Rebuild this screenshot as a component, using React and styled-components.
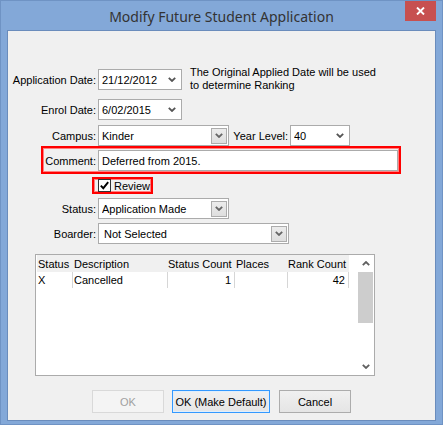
import React from "react";
import styled, { createGlobalStyle } from "styled-components";

const GlobalStyle = createGlobalStyle`
  html, body { margin: 0; padding: 0; background: #83a8d8; }
  body {
    font-family: "Liberation Sans", Arial, sans-serif;
    font-size: 11px;
    color: #000;
  }
  * { box-sizing: border-box; }
`;

const Window = styled.div`
  width: 443px;
  height: 425px;
  background: #83a8d8;
  border: 1px solid #6f93c4;
  padding: 0 6px 3px 6px;
  display: flex;
  flex-direction: column;
`;

const TitleBar = styled.div`
  height: 29px;
  display: grid;
  grid-template-columns: 1fr auto 1fr;
  align-items: center;
`;

const Title = styled.div`
  grid-column: 2;
  font-family: "Noto Sans", "Open Sans", sans-serif;
  font-size: 14px;
  color: #333;
  padding-top: 1px;
  white-space: nowrap;
`;

const CloseButton = styled.div`
  grid-column: 3;
  justify-self: end;
  align-self: start;
  width: 31px;
  height: 20px;
  background: #c75050;
  display: flex;
  align-items: center;
  justify-content: center;
`;

const Client = styled.div`
  flex: 1;
  background: #f0f0f0;
  border: 1px solid #6a8cbc;
  display: flex;
  flex-direction: column;
`;

const FieldRow = styled.div`
  display: flex;
  align-items: center;
  margin-top: ${(p) => p.$top}px;
  margin-left: ${(p) => p.$left || 0}px;
`;

const Label = styled.div`
  width: ${(p) => p.$width}px;
  margin-left: ${(p) => p.$left || 0}px;
  text-align: right;
  white-space: nowrap;
  margin-right: 2px;
`;

const Combo = styled.div`
  width: ${(p) => p.$width}px;
  height: 21px;
  background: #fff;
  border: 1px solid #ababab;
  display: flex;
  align-items: center;
  padding-left: ${(p) => p.$pad || 3}px;
  padding-right: ${(p) => (p.$button ? 1 : 5)}px;
`;

const ComboText = styled.span`
  flex: 1;
  white-space: nowrap;
  overflow: hidden;
`;

const DropButton = styled.div`
  width: 16px;
  height: 16px;
  border: 1px solid #acacac;
  background: linear-gradient(#ececec, #dedede);
  display: flex;
  align-items: center;
  justify-content: center;
`;

const InfoText = styled.div`
  margin-left: 8px;
  align-self: flex-start;
  margin-top: -1px;
  line-height: 13px;
`;

const Highlight = styled.div`
  display: flex;
  align-items: center;
  align-self: flex-start;
  margin-top: ${(p) => p.$top}px;
  margin-left: ${(p) => p.$left}px;
  border: 2px solid #ff0000;
  box-shadow: inset 0 0 0 1px #ff8080;
  padding: ${(p) => p.$pad};
`;

const TextBox = styled.div`
  width: ${(p) => p.$width}px;
  height: 21px;
  background: #fff;
  border: 1px solid #ababab;
  display: flex;
  align-items: center;
  padding-left: 3px;
`;

const CheckBox = styled.div`
  width: 13px;
  height: 13px;
  border: 1px solid #333;
  background: #fff;
  display: flex;
  align-items: center;
  justify-content: center;
  margin-right: 3px;
`;

const ListBox = styled.div`
  margin-top: ${(p) => p.$top}px;
  margin-left: ${(p) => p.$left}px;
  width: 340px;
  height: 122px;
  background: #fff;
  border: 1px solid #ababab;
  display: flex;
`;

const ListArea = styled.div`
  flex: 1;
  padding-left: 1px;
`;

const GridLine = styled.div`
  display: grid;
  grid-template-columns: 36px 95px 67px 53px 61px;
  width: 312px;
`;

const HeaderLine = styled(GridLine)`
  height: 17px;
  background: #f0f0f0;
  align-items: center;
`;

const RowLine = styled(GridLine)`
  height: 16px;
  align-items: stretch;
`;

const HeaderCell = styled.div`
  padding-left: ${(p) => (p.$flush ? 0 : 1)}px;
  white-space: nowrap;
  overflow: hidden;
`;

const Cell = styled.div`
  display: flex;
  align-items: center;
  justify-content: ${(p) => (p.$right ? "flex-end" : "flex-start")};
  padding: 0 3px 0 1px;
  border-right: 1px solid #d6d6d6;
  white-space: nowrap;
`;

const ScrollBar = styled.div`
  width: 17px;
  display: flex;
  flex-direction: column;
  background: #fff;
`;

const ScrollArrow = styled.div`
  height: 17px;
  display: flex;
  align-items: center;
  justify-content: center;
`;

const Thumb = styled.div`
  height: 51px;
  margin: 0 1px 0 1px;
  background: #cdcdcd;
`;

const Track = styled.div`
  flex: 1;
`;

const ButtonBar = styled.div`
  display: flex;
  margin-top: ${(p) => p.$top}px;
  margin-left: ${(p) => p.$left}px;
`;

const Button = styled.div`
  width: ${(p) => p.$width}px;
  height: 23px;
  margin-left: ${(p) => p.$gap || 0}px;
  display: flex;
  align-items: center;
  justify-content: center;
  white-space: nowrap;
  border: 1px solid
    ${(p) =>
      p.$variant === "disabled"
        ? "#d9d9d9"
        : p.$variant === "default"
        ? "#3399ff"
        : "#acacac"};
  background: ${(p) =>
    p.$variant === "disabled"
      ? "#f4f4f4"
      : "linear-gradient(#f0f0f0, #e5e5e5)"};
  color: ${(p) => (p.$variant === "disabled" ? "#a0a0a0" : "#000")};
  box-shadow: ${(p) =>
    p.$variant === "default" ? "inset 0 0 0 1px #e0eefc" : "none"};
`;

const Chevron = ({ up, color = "#555" }) => (
  <svg width="8" height="5" viewBox="0 0 8 5">
    <polyline
      points={up ? "0.8,4.2 4,1 7.2,4.2" : "0.8,0.8 4,4 7.2,0.8"}
      fill="none"
      stroke={color}
      strokeWidth="1.8"
    />
  </svg>
);

const CloseGlyph = () => (
  <svg width="9" height="8" viewBox="0 0 9 8">
    <path d="M1 0.5 L8 7.5 M8 0.5 L1 7.5" stroke="#fff" strokeWidth="1.9" />
  </svg>
);

const CheckGlyph = () => (
  <svg width="9" height="9" viewBox="0 0 9 9">
    <polyline points="0.8,4.6 3.3,7.2 8.2,1.2" fill="none" stroke="#000" strokeWidth="1.9" />
  </svg>
);

const DateField = ({ width, value }) => (
  <Combo $width={width}>
    <ComboText>{value}</ComboText>
    <Chevron />
  </Combo>
);

const SelectField = ({ width, value, pad }) => (
  <Combo $width={width} $button $pad={pad}>
    <ComboText>{value}</ComboText>
    <DropButton>
      <Chevron color="#666" />
    </DropButton>
  </Combo>
);

export default function App() {
  return (
    <>
      <GlobalStyle />
      <Window>
        <TitleBar>
          <Title>Modify Future Student Application</Title>
          <CloseButton>
            <CloseGlyph />
          </CloseButton>
        </TitleBar>
        <Client>
          <FieldRow $top={36}>
            <Label $width={88}>Application Date:</Label>
            <DateField width={84} value="21/12/2012" />
            <InfoText>
              The Original Applied Date will be used
              <br />
              to determine Ranking
            </InfoText>
          </FieldRow>
          <FieldRow $top={7}>
            <Label $width={88}>Enrol Date:</Label>
            <DateField width={84} value="6/02/2015" />
          </FieldRow>
          <FieldRow $top={5}>
            <Label $width={88}>Campus:</Label>
            <SelectField width={131} value="Kinder" />
            <Label $width={55} $left={4}>Year Level:</Label>
            <DateField width={60} value="40" />
          </FieldRow>
          <Highlight $top={0} $left={33} $pad="2px 1px 1px 0">
            <Label $width={53}>Comment:</Label>
            <TextBox $width={300}>Deferred from 2015.</TextBox>
          </Highlight>
          <Highlight $top={3} $left={84} $pad="0 1px 0 4px">
            <FieldRow $top={0}>
              <CheckBox>
                <CheckGlyph />
              </CheckBox>
              Review
            </FieldRow>
          </Highlight>
          <FieldRow $top={4}>
            <Label $width={88}>Status:</Label>
            <SelectField width={131} value="Application Made" />
          </FieldRow>
          <FieldRow $top={4}>
            <Label $width={88}>Boarder:</Label>
            <SelectField width={191} value="Not Selected" pad={5} />
          </FieldRow>
          <ListBox $top={10} $left={27}>
            <ListArea>
              <HeaderLine>
                <HeaderCell>Status</HeaderCell>
                <HeaderCell>Description</HeaderCell>
                <HeaderCell $flush>Status Count</HeaderCell>
                <HeaderCell>Places</HeaderCell>
                <HeaderCell $flush>Rank Count</HeaderCell>
              </HeaderLine>
              <RowLine>
                <Cell>X</Cell>
                <Cell>Cancelled</Cell>
                <Cell $right>1</Cell>
                <Cell></Cell>
                <Cell $right>42</Cell>
              </RowLine>
            </ListArea>
            <ScrollBar>
              <ScrollArrow>
                <Chevron up color="#606060" />
              </ScrollArrow>
              <Thumb />
              <Track />
              <ScrollArrow>
                <Chevron color="#606060" />
              </ScrollArrow>
            </ScrollBar>
          </ListBox>
          <ButtonBar $top={14} $left={84}>
            <Button $width={72} $variant="disabled">OK</Button>
            <Button $width={98} $gap={8} $variant="default">OK (Make Default)</Button>
            <Button $width={72} $gap={9}>Cancel</Button>
          </ButtonBar>
        </Client>
      </Window>
    </>
  );
}
